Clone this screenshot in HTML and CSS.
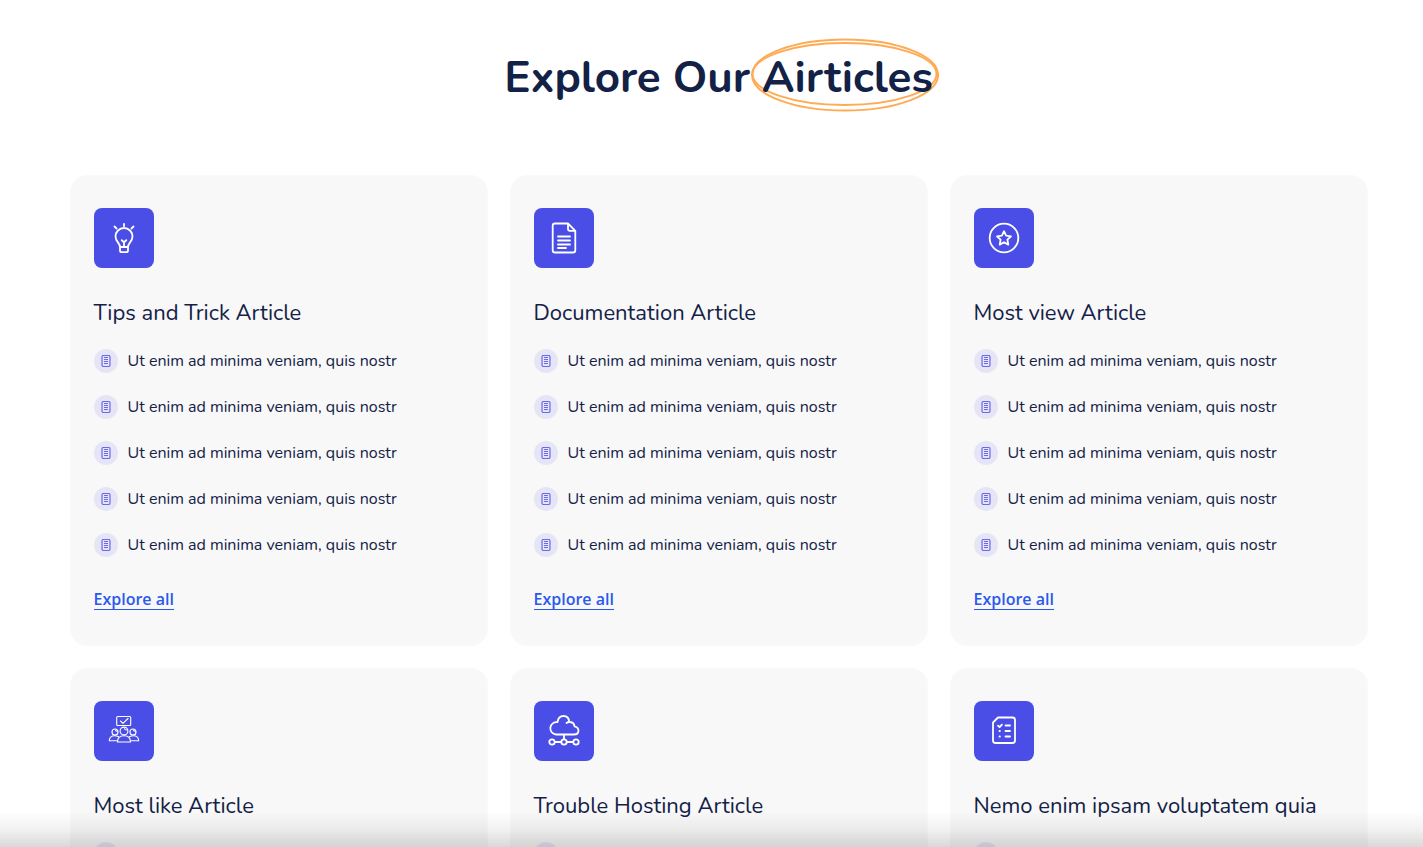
FILE: index.html
```html
<!DOCTYPE html>
<html lang="en">
<head>
<meta charset="utf-8">
<meta name="viewport" content="width=device-width, initial-scale=1">
<title>Explore Our Airticles</title>
<link rel="stylesheet" href="styles.css">
</head>
<body>
<svg class="sprite" aria-hidden="true">
  <symbol id="doc" viewBox="0 0 12 12">
    <rect x="2" y=".5" width="8" height="11" rx="1.5" fill="none" stroke="#6a68ee" stroke-width="1.2"/>
    <path d="M4 2.500h4M4 4.500h4M4 6.500h4M4 8.500h4" stroke="#6a68ee" stroke-width="1"/>
  </symbol>
</svg>
<main class="page">
  <h1 class="heading">Explore Our <span class="circled">Airticles<svg class="ring" viewBox="0 0 188 74" preserveAspectRatio="none" aria-hidden="true"><ellipse cx="94" cy="37" rx="93" ry="35.5"/><ellipse cx="93.500" cy="36" rx="92" ry="31"/></svg></span></h1>
  <div class="cards" id="cards"></div>
</main>
<div class="fade"></div>
<script src="app.js"></script>
</body>
</html>
```
FILE: styles.css
```css
* { box-sizing: border-box; }
body {
  margin: 0;
  height: 100vh;
  overflow: hidden;
  background: #fff;
  color: #132147;
  font-family: Nunito, Lato, sans-serif;
}
.sprite { position: absolute; width: 0; height: 0; }
.page {
  max-width: 1368px;
  margin: 0 auto;
  padding: 48px 28px 48px 42px;
}
.heading {
  margin: 0 0 67px;
  text-align: center;
  font-size: 44px;
  line-height: 60px;
  font-weight: 700;
}
.circled { position: relative; z-index: 0; white-space: nowrap; }
.ring {
  position: absolute;
  z-index: -1;
  left: -11px;
  top: -10px;
  width: calc(100% + 17px);
  height: 74px;
  fill: none;
  stroke: #ffab55;
  stroke-width: 2;
}
.cards {
  display: grid;
  grid-template-columns: repeat(auto-fill, minmax(380px, 1fr));
  gap: 22px;
}
.card {
  padding: 32px 23px 34px;
  border: 1px solid #fafafa;
  border-radius: 17px;
  background: #f8f8f8;
}
.tile {
  display: grid;
  place-items: center;
  width: 60px;
  height: 60px;
  border-radius: 8px;
  background: #4b4ee6;
}
.tile svg {
  width: 32px;
  height: 32px;
  fill: none;
  stroke: #fff;
  stroke-width: 1.8;
  stroke-linecap: round;
  stroke-linejoin: round;
}
.title {
  margin: 30px 0 21px;
  font-size: 22px;
  line-height: 30px;
  font-weight: 400;
}
.list {
  display: grid;
  gap: 22px;
  margin: 0 0 32px;
  padding: 0;
  list-style: none;
  font-size: 16px;
  line-height: 24px;
}
.item { display: flex; align-items: center; gap: 10px; }
.badge {
  display: grid;
  place-items: center;
  width: 24px;
  height: 24px;
  border-radius: 50%;
  background: #e6e5f6;
}
.badge svg { width: 12px; height: 12px; }
.more {
  display: inline-block;
  border-bottom: 1px solid #2b59ee;
  color: #2b59ee;
  font-family: "Open Sans", "Noto Sans", sans-serif;
  font-size: 16px;
  line-height: 20px;
  font-weight: 600;
  text-decoration: none;
}
.fade {
  position: fixed;
  right: 0;
  bottom: 0;
  left: 0;
  height: 36px;
  background: linear-gradient(rgba(0, 0, 0, 0), rgba(0, 0, 0, .05) 50%, rgba(0, 0, 0, .15));
  pointer-events: none;
}
```
FILE: app.js
```js
const cards = [
  ["Tips and Trick Article", '<path d="M16 1.800v2.500M6.500 4.500l2 2M25.500 4.500l-2 2M12 25c0-4-4.500-5.500-4.500-10.500a8.500 8.500 0 0 1 17 0C24.500 19.500 20 21 20 25ZM12 25v3.500q0 1.700 1.700 1.700h4.600q1.700 0 1.700-1.700V25M16 25v-5M13.700 18.200l2.300 2 2.300-2"/>'],
  ["Documentation Article", '<path d="M20 1.500H7q-2.300 0-2.300 2.300v24.400q0 2.300 2.300 2.300h18q2.300 0 2.300-2.300V8.800ZM20 1.500v5.300q0 2 2 2h5.300M10 14.500h12M10 18.500h12M10 22.500h12M10 26h8"/>'],
  ["Most view Article", '<circle cx="16" cy="16" r="14.300"/><path d="m16 9.200 2.100 4.500 4.900.6-3.600 3.400.9 4.900-4.300-2.400-4.300 2.400.9-4.900L9 14.300l4.900-.6Z"/>'],
  ["Most like Article", '<g stroke-width="1.100"><rect x="8.700" y="1.500" width="14" height="9" rx="1"/><path d="m12.500 6 2.500 2.300 5-4.800"/><circle cx="16" cy="16" r="3.900"/><path d="M16.500 13.500q.3 1.500 2.500 1.500M9.500 27c0-4 1.800-6.200 6.500-6.200s6.500 2.200 6.500 6.200Z"/><circle cx="7" cy="17" r="3"/><circle cx="25" cy="17" r="3"/><path d="M7.500 15q.3 1.200 1.800 1.300M25.500 15q.3 1.200 1.800 1.300M9 25.800H1.300c.2-3.300 1.700-5 5.200-5q2.500 0 4 1M23 25.800h7.700c-.2-3.300-1.700-5-5.200-5q-2.500 0-4 1"/></g>'],
  ["Trouble Hosting Article", '<path d="M8 19.500a6.200 6.200 0 1 1 1.500-12.300C10 3.500 12 1 15.500 1s5.500 2 5.700 6c3.300 0 5 1.500 5.300 4.300 5.500 1.200 5.200 8.200-.5 8.200ZM21.200 7q-1.500 0-2.700 1M16 19.500V24M7 27h6M19 27h6"/><circle cx="4" cy="27" r="2.700"/><circle cx="16" cy="27" r="2.700"/><circle cx="28" cy="27" r="2.700"/>'],
  ["Nemo enim ipsam voluptatem quia", '<path d="M10 2.500h14.500q2.500 0 2.500 2.500v20.500q0 2.500-2.500 2.500h-17Q5 28 5 25.500V7.500ZM10 10.700l1.600 1.500 2.300-2.500M17.500 10.500H22M17.500 16H22M17.500 21.500H22M11.500 16h.4M11.500 21.500h.4"/>']
];
const item = '<li class="item"><span class="badge"><svg aria-hidden="true"><use href="#doc"/></svg></span>Ut enim ad minima veniam, quis nostr</li>';
document.getElementById("cards").innerHTML = cards.map(([title, icon]) => `
  <article class="card">
    <div class="tile"><svg viewBox="0 0 32 32" aria-hidden="true">${icon}</svg></div>
    <h2 class="title">${title}</h2>
    <ul class="list">${item.repeat(5)}</ul>
    <a class="more" href="#">Explore all</a>
  </article>`).join("");
```
